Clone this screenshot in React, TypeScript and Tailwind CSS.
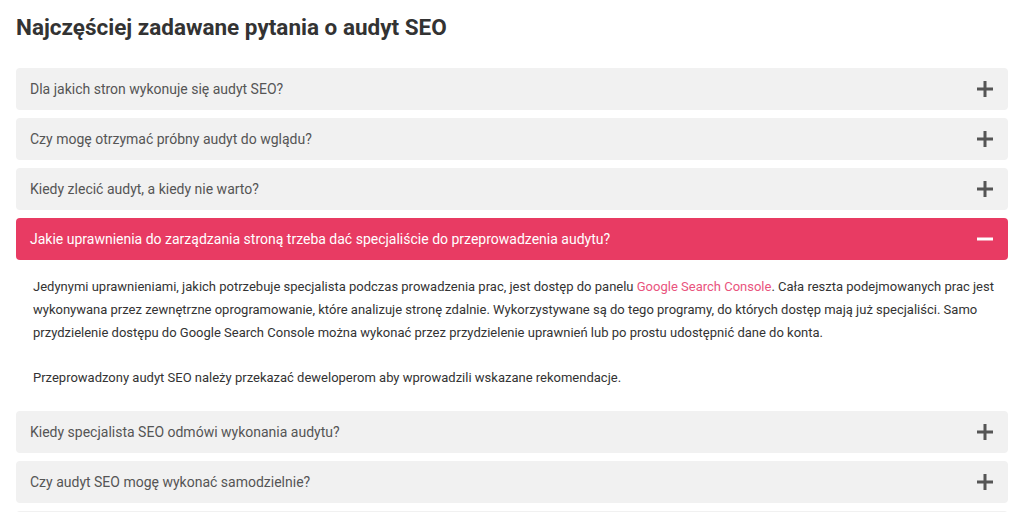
import React from "react";

const Plus = () => (
  <svg width="18" height="18" viewBox="0 0 18 18"><path d="M9 1v16M1 9h16" stroke="#555" strokeWidth="3" /></svg>
);
const Minus = () => (
  <svg width="18" height="18" viewBox="0 0 18 18"><path d="M1 9h16" stroke="#fff" strokeWidth="3" /></svg>
);

const Q = ({ t }: { t: string }) => (
  <div className="h-[42px] rounded-[4px] bg-[#f1f1f1] flex items-center justify-between pl-[14px] pr-[14px] text-[14px] text-[#555]">
    <span>{t}</span>
    <Plus />
  </div>
);

export default function App() {
  return (
    <div className="w-[1024px] h-[512px] overflow-hidden bg-white px-4" style={{ fontFamily: "Roboto, sans-serif" }}>
      <h2 className="pt-[13px] h-[68px] text-[22.5px] font-bold text-[#333] leading-[28px]">Najczęściej zadawane pytania o audyt SEO</h2>
      <div className="flex flex-col gap-2 w-[992px]">
        <Q t="Dla jakich stron wykonuje się audyt SEO?" />
        <Q t="Czy mogę otrzymać próbny audyt do wglądu?" />
        <Q t="Kiedy zlecić audyt, a kiedy nie warto?" />
        <div>
          <div className="h-[42px] rounded-[4px] bg-[#e83b63] flex items-center justify-between pl-[14px] pr-[14px] text-[14px] text-white">
            <span>Jakie uprawnienia do zarządzania stroną trzeba dać specjaliście do przeprowadzenia audytu?</span>
            <Minus />
          </div>
          <div className="pl-[17px] pr-[10px] pt-[15px] pb-[14px] text-[13px] leading-[23px] text-[#333]">
            <p>Jedynymi uprawnieniami, jakich potrzebuje specjalista podczas prowadzenia prac, jest dostęp do panelu <span className="text-[#e9537d]">Google Search Console</span>. Cała reszta podejmowanych prac jest wykonywana przez zewnętrzne oprogramowanie, które analizuje stronę zdalnie. Wykorzystywane są do tego programy, do których dostęp mają już specjaliści. Samo przydzielenie dostępu do Google Search Console można wykonać przez przydzielenie uprawnień lub po prostu udostępnić dane do konta.</p>
            <p className="mt-[22px]">Przeprowadzony audyt SEO należy przekazać deweloperom aby wprowadzili wskazane rekomendacje.</p>
          </div>
        </div>
        <Q t="Kiedy specjalista SEO odmówi wykonania audytu?" />
        <Q t="Czy audyt SEO mogę wykonać samodzielnie?" />
        <Q t="" />
      </div>
    </div>
  );
}
